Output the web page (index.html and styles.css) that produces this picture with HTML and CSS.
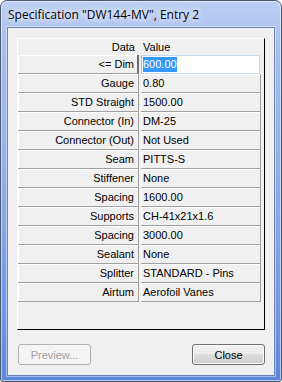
FILE: index.html
```html
<!DOCTYPE html>
<html lang="en">
<head>
  <meta charset="UTF-8" />
  <title>Specification</title>
  <link rel="stylesheet" href="styles.css">
</head>
<body>
  <div class="window">
    <div class="title">Specification "DW144-MV", Entry 2</div>
    <div class="client">
      <div class="grid">
        <div class="head"><div class="key">Data</div><div class="val">Value</div></div>
        <div class="row"><div class="key sel-key">&lt;= Dim</div><div class="val edit"><span class="sel">600.00</span></div></div>
        <div class="row"><div class="key">Gauge</div><div class="val">0.80</div></div>
        <div class="row"><div class="key">STD Straight</div><div class="val">1500.00</div></div>
        <div class="row"><div class="key">Connector (In)</div><div class="val">DM-25</div></div>
        <div class="row"><div class="key">Connector (Out)</div><div class="val">Not Used</div></div>
        <div class="row"><div class="key">Seam</div><div class="val">PITTS-S</div></div>
        <div class="row"><div class="key">Stiffener</div><div class="val">None</div></div>
        <div class="row"><div class="key">Spacing</div><div class="val">1600.00</div></div>
        <div class="row"><div class="key">Supports</div><div class="val">CH-41x21x1.6</div></div>
        <div class="row"><div class="key">Spacing</div><div class="val">3000.00</div></div>
        <div class="row"><div class="key">Sealant</div><div class="val">None</div></div>
        <div class="row"><div class="key">Splitter</div><div class="val">STANDARD - Pins</div></div>
        <div class="row"><div class="key">Airtum</div><div class="val">Aerofoil Vanes</div></div>
      </div>
      <div class="buttons">
        <button disabled>Preview...</button>
        <button>Close</button>
      </div>
    </div>
  </div>
</body>
</html>
```

FILE: styles.css
```css
body { margin: 0; background: #fff; font-family: "Liberation Sans", Arial, sans-serif; font-size: 11px; color: #000; }

.window {
  box-sizing: border-box; width: 282px; height: 382px;
  border: 1px solid #4b5a73; border-radius: 7px 7px 3px 3px;
  padding: 0 6px 5px 6px;
  background: linear-gradient(to bottom, #bccff4 0%, #a7bdec 12%, #92aee8 45%, #7399e0 80%, #5b86da 100%);
  box-shadow: inset 0 0 0 1px rgba(255,255,255,0.55);
  display: flex; flex-direction: column;
}
.title {
  height: 26px; line-height: 27px; padding-left: 1px;
  font-family: "Open Sans", "Liberation Sans", sans-serif; font-size: 12px; color: #000;
  text-shadow: 0 0 8px #fff, 0 0 6px #fff;
}
.client {
  flex: 1; background: #f0f0f0;
  border: 1px solid #6d84b4;
  box-shadow: 0 0 0 1px rgba(255,255,255,0.45);
  padding: 10px 9px 10px 9px;
  display: flex; flex-direction: column;
}

.grid {
  box-sizing: border-box; height: 292px;
  border-top: 1px solid #fff; border-left: 1px solid #fff;
  border-right: 1px solid #000; border-bottom: 1px solid #000;
}
.head, .row { display: flex; }
.head { height: 16px; line-height: 16px; }
.row { height: 19px; }

.key {
  box-sizing: border-box; width: 121px; margin-right: 2px;
  text-align: right; padding-right: 4px;
}
.val { box-sizing: border-box; width: 120px; padding-left: 2px; }

.row .key, .row .val {
  line-height: 18px;
  border-right: 1px solid #a0a0a0; border-bottom: 1px solid #a0a0a0;
  box-shadow: inset 1px 1px #fff;
}
.row .sel-key { border-right: 2px solid #6e6e6e; padding-right: 3px; }
.row .edit {
  background: #fff; box-shadow: none;
  border: 1px solid #c9d9ec; border-left-color: #9db8da;
  width: 119px; margin-right: 1px; padding-left: 1px; line-height: 17px;
}
.sel { background: #3399ff; color: #fff; display: inline-block; line-height: 15px; }

.buttons { display: flex; justify-content: space-between; margin-top: 14px; padding-left: 1px; }
button {
  width: 73px; height: 21px; padding: 0;
  font-family: "Liberation Sans", Arial, sans-serif; font-size: 11px; color: #000;
  border: 1px solid #707070; border-radius: 3px;
  background: linear-gradient(to bottom, #f2f2f2 0%, #ebebeb 50%, #dddddd 50%, #cfcfcf 100%);
  box-shadow: inset 0 0 0 1px #fafafa;
}
button:disabled {
  color: #a0a0a0; border-color: #adb2b5;
  background: #f4f4f4; box-shadow: none;
}
```
